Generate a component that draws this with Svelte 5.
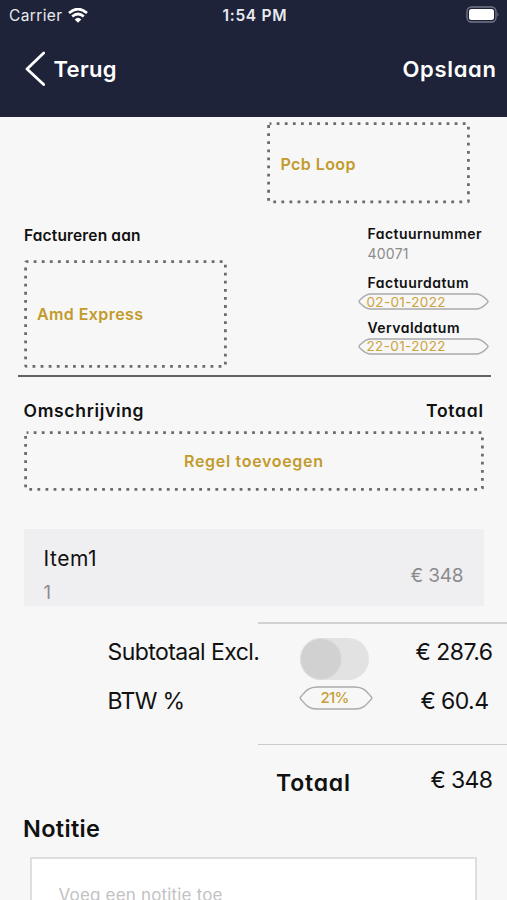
<script>
  // Tracks a label out (or in) so that it takes the given width.
  function fit(node, width) {
    const natural = node.getBoundingClientRect().width;
    const gaps = node.textContent.length - 1;
    const spacing = (width - natural) / gaps;
    node.style.letterSpacing = `${spacing}px`;
    node.style.marginRight = `${-spacing}px`;
  }

  const invoice = {
    sender: 'Pcb Loop',
    client: 'Amd Express',
    number: '40071',
    date: '02-01-2022',
    due: '22-01-2022'
  };
</script>

{#snippet dots(w, h)}
  <svg class="dots" width={w} height={h} aria-hidden="true">
    <rect x="1.6" y="1.6" width={w - 3.2} height={h - 3.2} rx="1" />
  </svg>
{/snippet}

{#snippet datePill(value)}
  <div class="pill date">
    <svg width="131" height="17" aria-hidden="true">
      <path d="M13 1H118C124 1 127 5 129.5 7.5Q130.5 8.5 129.5 9.500C127 12 124 16 118 16H13C7 16 4 12 1.500 9.500Q.5 8.500 1.500 7.500C4 5 7 1 13 1Z" />
    </svg>
    <span use:fit={79}>{value}</span>
  </div>
{/snippet}

<div class="screen">
  <header>
    <div class="status">
      <div class="carrier">
        <span use:fit={53}>Carrier</span>
        <svg width="20" height="15" viewBox="0 0 20 15" fill="none" stroke="#fff" stroke-width="2.7">
          <path d="M1 5.100Q10-2.900 19 5.100M4.200 8.600Q10 3.400 15.800 8.600" />
          <path d="M6.700 11.400Q10 8.300 13.300 11.400L10 14.700Z" fill="#fff" stroke="none" />
        </svg>
      </div>
      <span class="time" use:fit={64}>1:54 PM</span>
      <svg class="battery" width="34" height="18" viewBox="0 0 34 18">
        <rect x="1" y="1" width="29" height="15" rx="4.500" fill="none" stroke="#747889" stroke-width="1.300" />
        <rect x="3" y="3" width="25" height="11" rx="2.500" fill="#fff" />
        <path d="M31.500 6.300Q33.500 8.500 31.500 10.700Z" fill="#747889" />
      </svg>
    </div>
    <nav>
      <div class="back">
        <svg width="21" height="36" viewBox="0 0 21 36" fill="none" stroke="#fff" stroke-width="2.800" stroke-linecap="round" stroke-linejoin="round">
          <path d="M19.700 2L3 18L19.700 33.500" />
        </svg>
        <span class="geo" use:fit={63}>Terug</span>
      </div>
      <span class="geo" use:fit={93.5}>Opslaan</span>
    </nav>
  </header>

  <div class="dotted sender">
    {@render dots(203, 81.500)}
    <span class="geo gold" use:fit={75}>{invoice.sender}</span>
  </div>

  <section class="billing">
    <div class="client">
      <span class="geo label" use:fit={116.5}>Factureren aan</span>
      <div class="dotted">
        {@render dots(203, 108)}
        <span class="geo gold" use:fit={106}>{invoice.client}</span>
      </div>
    </div>
    <div class="meta">
      <span class="geo small" use:fit={114}>Factuurnummer</span>
      <span class="number" use:fit={41}>{invoice.number}</span>
      <span class="geo small" use:fit={101}>Factuurdatum</span>
      {@render datePill(invoice.date)}
      <span class="geo small second" use:fit={92}>Vervaldatum</span>
      {@render datePill(invoice.due)}
    </div>
  </section>

  <div class="rule"></div>

  <div class="columns">
    <span class="geo" use:fit={120}>Omschrijving</span>
    <span class="geo" use:fit={57}>Totaal</span>
  </div>

  <div class="dotted add">
    {@render dots(460, 60)}
    <span class="geo gold" use:fit={139}>Regel toevoegen</span>
  </div>

  <div class="item">
    <div class="name">
      <span use:fit={53}>Item1</span>
      <small>1</small>
    </div>
    <span class="price" use:fit={53}>€ 348</span>
  </div>

  <div class="thin"></div>
  <section class="totals">
    <div class="names">
      <span use:fit={152.5}>Subtotaal Excl.</span>
      <span use:fit={77.5}>BTW %</span>
    </div>
    <div class="controls">
      <div class="toggle"><i></i></div>
      <div class="pill vat">
        <svg width="74" height="24" aria-hidden="true">
          <path d="M18 1H56C65 1 68 6 72 10.500Q73.500 12 72 13.500C68 18 65 23 56 23H18C9 23 6 18 2 13.500Q.5 12 2 10.500C6 6 9 1 18 1Z" />
        </svg>
        <span use:fit={29}>21%</span>
      </div>
    </div>
    <div class="amounts">
      <span use:fit={77.5}>€ 287.6</span>
      <span class="vat-amount" use:fit={68.5}>€ 60.4</span>
    </div>
  </section>
  <div class="thin lower"></div>

  <div class="grand">
    <span class="geo" use:fit={74}>Totaal</span>
    <span class="sum" use:fit={62.5}>€ 348</span>
  </div>

  <span class="geo note-title" use:fit={77}>Notitie</span>
  <div class="note"><span use:fit={164}>Voeg een notitie toe</span></div>
</div>

<style>
  :global(body) {
    margin: 0;
    background: #f7f7f7;
  }
  .screen {
    display: flex;
    flex-direction: column;
    width: 507px;
    height: 900px;
    overflow: hidden;
    background: #f7f7f7;
    color: #111;
    font-family: Inter, Roboto, 'Liberation Sans', sans-serif;
  }
  span {
    display: block;
    width: max-content;
    white-space: nowrap;
  }
  .geo {
    font-weight: 600;
    font-feature-settings: 'cv11', 'ss03';
  }
  .gold {
    color: #c29b2c;
    font-size: 16px;
  }
  header {
    flex: none;
    height: 116.500px;
    background: #1f2339;
    color: #fff;
  }
  .status {
    display: grid;
    grid-template-columns: 1fr auto 1fr;
    align-items: center;
    height: 30px;
    padding: 0 7px 0 9px;
    font-size: 15.5px;
    color: #e9eaf0;
  }
  .carrier {
    display: flex;
    align-items: center;
    gap: 6px;
  }
  .time {
    font-weight: 600;
    font-size: 15.500px;
  }
  .battery {
    justify-self: end;
    margin-bottom: 1px;
  }
  nav {
    display: flex;
    justify-content: space-between;
    align-items: center;
    height: 78px;
    padding: 0 11px 0 24px;
    font-size: 22px;
  }
  .back {
    display: flex;
    align-items: center;
    gap: 8.500px;
  }
  .dotted {
    position: relative;
    display: flex;
    flex: none;
    align-items: center;
    box-sizing: border-box;
    padding-left: 13.500px;
  }
  .dots {
    position: absolute;
    inset: 0;
  }
  .dots rect {
    fill: none;
    stroke: #6c6c6c;
    stroke-width: 2.800;
    stroke-dasharray: 2.800 5.290;
    stroke-dashoffset: 1;
  }
  .sender {
    width: 203px;
    height: 81.500px;
    margin: 5.500px 0 0 267px;
    padding-top: 1.500px;
  }
  .billing {
    display: flex;
    justify-content: space-between;
    flex: none;
    height: 145px;
    margin: 19.500px 0 0;
    padding: 0 18px 0 24px;
  }
  .label {
    font-size: 15.500px;
    line-height: 25px;
  }
  .client .dotted {
    width: 203px;
    height: 108px;
    margin: 12px 0 0 -.5px;
  }
  .meta {
    width: 131px;
  }
  .meta > span {
    margin-left: 9.500px;
  }
  .small {
    font-size: 14px;
    line-height: 22px;
  }
  .number {
    margin-bottom: 9px;
    color: #8b8b8b;
    font-size: 14px;
    line-height: 18px;
  }
  .second {
    margin-top: 6.500px;
  }
  .pill {
    position: relative;
    display: flex;
    align-items: center;
  }
  .pill svg {
    position: absolute;
    inset: 0;
    fill: none;
    stroke: #aaa;
    stroke-width: 1.400;
  }
  .date {
    height: 17px;
    margin-top: -1px;
    padding-left: 8.500px;
    color: #cba33b;
    font-size: 13.500px;
  }
  .rule {
    flex: none;
    width: 473.500px;
    height: 2px;
    margin: 7px 0 0 17.500px;
    background: #626462;
  }
  .columns {
    display: flex;
    justify-content: space-between;
    flex: none;
    margin-top: 22px;
    padding: 0 24px 0 23.500px;
    font-size: 17.500px;
    line-height: 24px;
  }
  .add {
    justify-content: center;
    width: 460px;
    height: 60px;
    margin: 8px 0 0 24px;
    padding: 0 1px 0 0;
  }
  .item {
    display: flex;
    justify-content: space-between;
    flex: none;
    box-sizing: border-box;
    width: 460px;
    height: 77px;
    margin: 38px 0 0 24px;
    padding: 14.500px 20.500px 0 19.500px;
    background: #efeff1;
  }
  .name {
    font-size: 21px;
    line-height: 30px;
  }
  .name small {
    display: block;
    margin: 3.500px 0 0;
    color: #8b8b8d;
    font-size: 18.500px;
  }
  .price {
    margin-top: 17px;
    color: #8b8b8d;
    font-size: 19px;
    line-height: 30px;
  }
  .thin {
    flex: none;
    height: 1.500px;
    margin: 16px 0 0 257.500px;
    background: #d2d2d2;
  }
  .totals {
    display: flex;
    flex: none;
    height: 104px;
    padding-right: 14px;
    font-size: 23px;
    line-height: 30px;
  }
  .names {
    display: flex;
    flex-direction: column;
    gap: 18.500px;
    width: 191px;
    padding: 13.500px 0 0 107.500px;
  }
  .controls {
    display: flex;
    flex-direction: column;
    gap: 5.500px;
    padding-top: 14px;
  }
  .toggle {
    width: 69px;
    height: 42.500px;
    margin-left: 1.500px;
    border-radius: 22px;
    background: #e2e2e2;
  }
  .toggle i {
    display: block;
    width: 40px;
    height: 40px;
    border: 1.200px solid #dedede;
    border-radius: 50%;
    background: #d1d1d1;
  }
  .vat {
    justify-content: center;
    width: 73px;
    height: 24px;
    color: #c5a033;
    font-size: 15px;
    font-weight: 500;
  }
  .amounts {
    display: flex;
    flex-direction: column;
    align-items: flex-end;
    gap: 18.500px;
    margin-left: auto;
    padding-top: 13.500px;
  }
  .vat-amount {
    position: relative;
    left: -4px;
  }
  .lower {
    height: 1px;
    margin-bottom: .5px;
    background: #cbcbcb;
  }
  .grand {
    display: flex;
    justify-content: space-between;
    flex: none;
    padding: 21.500px 14px 0 276px;
    font-size: 23px;
    line-height: 32px;
  }
  .sum {
    margin-top: -3px;
  }
  .note-title {
    margin: 14px 0 0 23px;
    font-size: 23.500px;
    line-height: 32px;
  }
  .note {
    flex: none;
    box-sizing: border-box;
    width: 447px;
    height: 120px;
    margin: 12px 0 0 30px;
    padding: 21px 0 0 26.500px;
    border: 2px solid #dedede;
    background: #fff;
    color: #c2c2c4;
    font-size: 17px;
    line-height: 30px;
  }
</style>
